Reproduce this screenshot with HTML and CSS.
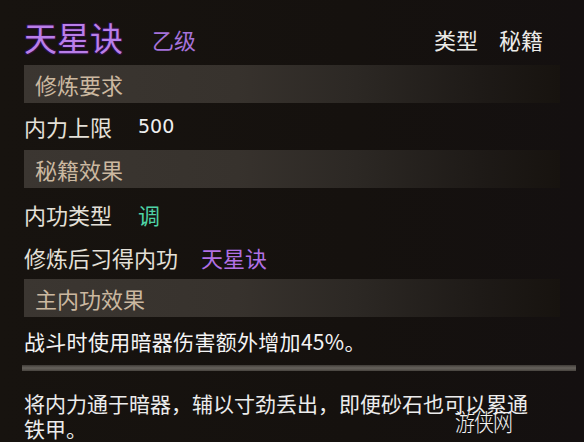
FILE: index.html
```html
<!DOCTYPE html>
<html lang="zh">
<head>
<meta charset="utf-8">
<link rel="stylesheet" href="styles.css">
</head>
<body>
<div class="panel">
  <div class="title-row">
    <span class="title">天星诀</span>
    <span class="grade">乙级</span>
    <span class="type">
      <span class="type-label">类型</span>
      <span class="type-value">秘籍</span>
    </span>
  </div>

  <div class="bar bar-1">修炼要求</div>
  <div class="row row-1"><span class="label">内力上限</span><span class="value num">500</span></div>

  <div class="bar">秘籍效果</div>
  <div class="row row-2"><span class="label">内功类型</span><span class="value green">调</span></div>
  <div class="row row-3"><span class="label">修炼后习得内功</span><span class="value purple">天星诀</span></div>

  <div class="bar">主内功效果</div>
  <div class="effect">战斗时使用暗器伤害额外增加45%。</div>

  <div class="separator"></div>

  <p class="desc">将内力通于暗器，辅以寸劲丢出，即便砂石也可以累通铁甲。</p>

  <span class="watermark">游侠网</span>
</div>
</body>
</html>
```

FILE: styles.css
```css
html, body {
  margin: 0;
  padding: 0;
  background: #16120f;
}

body {
  width: 584px;
  height: 442px;
  overflow: hidden;
  font-family: "Noto Sans CJK SC", "Noto Sans", sans-serif;
  color: #e6e2da;
}

.panel {
  position: relative;
  padding: 18px 24px 0 24px;
  height: 424px;
  background: linear-gradient(to right, #17130f 0%, #15110e 60%, #141010 100%);
}

.title-row {
  display: flex;
  align-items: center;
  height: 38px;
  line-height: 38px;
}

.title {
  font-size: 33px;
  color: #b97ee9;
  text-shadow: 1px 1px 0 #2a0f3d, -1px -1px 0 #2a0f3d, 1px -1px 0 #2a0f3d, -1px 1px 0 #2a0f3d;
}

.grade {
  margin-left: 29px;
  padding-top: 4px;
  font-size: 22px;
  color: #a572da;
}

.type {
  margin-left: auto;
  margin-right: 17px;
  padding-top: 4px;
  display: flex;
  gap: 21px;
  font-size: 22px;
  color: #ecebe8;
}

.bar {
  height: 38px;
  line-height: 38px;
  padding-left: 11px;
  font-size: 22px;
  color: #cbb8a0;
  background: linear-gradient(to right, #3b3631 0%, #37322d 40%, #2c2824 62%, #1e1a17 85%, #17130f 100%);
}

.bar-1 {
  margin-top: 9px;
}

.row {
  display: flex;
  gap: 26px;
  font-size: 22px;
}

.row-1 {
  height: 47px;
  line-height: 47px;
}

.row-2 {
  padding-top: 4px;
  height: 44px;
  line-height: 44px;
}

.row-3 {
  height: 43px;
  line-height: 43px;
  gap: 23px;
}

.label {
  color: #e4e0d8;
}

.num {
  color: #efefef;
  font-family: "DejaVu Sans", sans-serif;
  font-size: 19px;
}

.green {
  color: #4fd3a6;
}

.purple {
  color: #b070e4;
}

.effect {
  height: 48px;
  line-height: 48px;
  font-size: 21px;
  letter-spacing: 0.3px;
  color: #f4f4f4;
}

.separator {
  height: 6px;
  margin-left: -2px;
  margin-right: -16px;
  background: linear-gradient(to bottom, #3f3b37, #66625c 50%, #48443f);
}

.desc {
  margin: 20px 0 0 0;
  width: 515px;
  font-size: 21px;
  line-height: 25px;
  color: #ececec;
}

.watermark {
  position: absolute;
  left: 455px;
  top: 409px;
  font-size: 20px;
  line-height: 24px;
  color: #f2f2f2;
  font-weight: 300;
  letter-spacing: -1px;
  transform: scaleY(1.2);
}
```
